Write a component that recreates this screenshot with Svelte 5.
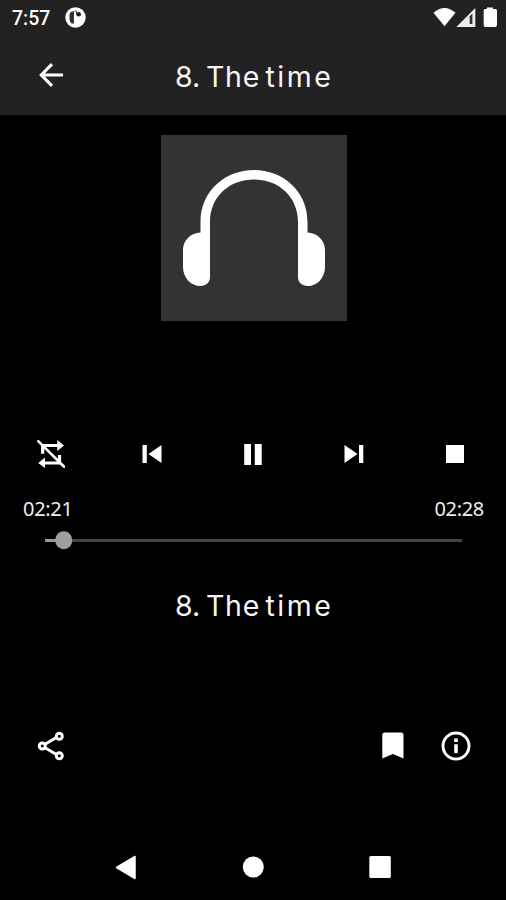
<script>
  const title = '8. The time';
  const words = title.split(' ');
  const elapsed = '02:21';
  const total = '02:28';
  const progress = 4.5;
</script>

{#snippet titleText()}
  {#each words as word, i}<span class="word w{i}">{word}{i < words.length - 1 ? ' ' : ''}</span>{/each}
{/snippet}

<div class="screen">
  <header>
    <div class="status">
      <span class="clock">7:57</span>
      <svg class="app" width="21" height="21" viewBox="0 0 21 21">
        <circle cx="10.500" cy="10.500" r="10.200" fill="#fff" />
        <path d="M9 4.200V16.500H6.800Q4.500 15.500 4.500 12V7.500Q5 4.200 9 4.200Z" fill="#333" />
        <circle cx="13.700" cy="7.300" r="2.300" fill="#222" />
        <path d="M9.500 4.200H11.500V8" stroke="#444" stroke-width="1" fill="none" />
      </svg>
      <svg class="signals" width="64" height="21" viewBox="0 0 64 21">
        <path d="M.5 5.700Q11.500-3.700 22.500 5.700L11.500 19.200Z" fill="#fff" />
        <path d="M42.300 1V20H23.300Z" fill="#eee" />
        <path d="M36.700 9.200 39.400 6.500V17H36.700Z" fill="#333" />
        <path d="M54 .5H60V2H62.500Q64 2 64 3.500V18Q64 20 62 20H52.500Q50.700 20 50.700 18V3.500Q50.700 2 52 2H54Z" fill="#fff" />
      </svg>
    </div>
    <div class="bar">
      <svg width="24" height="24" viewBox="0 0 24 24" fill="none" stroke="#fff" stroke-width="3.100">
        <path d="M13 1.200 2.300 12 13 22.800M2.500 12H24" />
      </svg>
      <h1>{@render titleText()}</h1>
    </div>
  </header>

  <main>
    <div class="cover">
      <svg width="186" height="186" viewBox="0 0 186 186" fill="#fff">
        <path d="M39.500 97.500V87C39.500 56 64 35 93 35S146.500 56 146.500 87V97.500C156 98 164 105 164 115V132C164 143 156 151 147 151C141 151 137 147.500 137 142V87C137 61 117 44.500 93 44.500S49 61 49 87V142C49 147.500 45 151 39.500 151C30 151 22 143 22 132V115C22 105 30 98 39.500 97.500Z" />
      </svg>
    </div>

    <div class="controls">
      <button aria-label="Repeat off">
        <svg width="28" height="28" viewBox="0 0 28 28" fill="none" stroke="#fff">
          <path d="M5.700 13.700V5.500H21M22.500 15V23H7" stroke-width="3.200" />
          <path d="M20.300 0 27 5.500 20.300 11ZM8 17.500 1.200 23 8 28Z" fill="#fff" stroke="none" />
          <path d="M.5 .5 28 27.700" stroke-width="2.600" />
        </svg>
      </button>
      <button aria-label="Previous">
        <svg width="20" height="18" viewBox="0 0 20 18" fill="#fff"><path d="M.5 0H4.800V18H.5ZM19.500 0V18L6.500 9Z" /></svg>
      </button>
      <button aria-label="Pause">
        <svg width="18" height="21" viewBox="0 0 18 21" fill="#fff"><path d="M.2 0H7V21H.2ZM10.800 0H17.700V21H10.800Z" /></svg>
      </button>
      <button aria-label="Next">
        <svg width="20" height="18" viewBox="0 0 20 18" fill="#fff"><path d="M.5 0 13.500 9 .5 18ZM15 0H19.300V18H15Z" /></svg>
      </button>
      <button aria-label="Stop">
        <svg width="18" height="18" viewBox="0 0 18 18"><path d="M0 0H18V18H0Z" fill="#fff" /></svg>
      </button>
    </div>

    <div class="times"><span>{elapsed}</span><span>{total}</span></div>
    <div class="track">
      <div class="played" style="width: {progress}%"></div>
      <div class="thumb" style="left: {progress}%"></div>
    </div>

    <h2>{@render titleText()}</h2>

    <div class="actions">
      <svg width="28" height="30" viewBox="0 0 28 30" fill="none" stroke="#fff" stroke-width="3">
        <path d="M8 13.300 19 6.800M8 16.700 19 23.200" />
        <circle cx="5.300" cy="15" r="3" /><circle cx="22.300" cy="5.300" r="3" /><circle cx="22.300" cy="24.700" r="3" />
      </svg>
      <svg class="mark" width="22" height="27" viewBox="0 0 22 27" fill="#fff"><path d="M.3 26.500V3Q.3 .5 3 .5H19Q21.500 .5 21.500 3V26.500L11 22Z" /></svg>
      <svg width="30" height="30" viewBox="0 0 30 30">
        <circle cx="15" cy="15" r="13" fill="none" stroke="#fff" stroke-width="2.900" />
        <path d="M13.200 7.500H16.800V10.900H13.200ZM13.200 13.300H16.800V22.300H13.200Z" fill="#fff" />
      </svg>
    </div>
  </main>

  <nav>
    <svg width="22" height="25" viewBox="0 0 22 25"><path d="M20 1.500V23.500L1.500 12.500Z" fill="#fff" stroke="#fff" stroke-width="1.500" stroke-linejoin="round" /></svg>
    <svg width="22" height="22" viewBox="0 0 22 22"><circle cx="11.300" cy="11" r="10.500" fill="#fff" /></svg>
    <svg width="22" height="22" viewBox="0 0 22 22"><rect x=".3" width="21.500" height="22" rx="1.500" fill="#fff" /></svg>
  </nav>
</div>

<style>
  :global(body) { margin: 0; background: #000; }
  .screen { width: 506px; height: 900px; display: flex; flex-direction: column; background: #000; color: #fff; overflow: hidden; }
  svg { display: block; flex: none; }
  header { height: 114.500px; background: #222; flex: none; }
  .status { height: 36px; display: flex; align-items: center; padding: 0 9px 0 12px; box-sizing: border-box; }
  .clock { width: 53px; font: 500 19.500px/36px Roboto, sans-serif; padding-top: 1px; }
  .signals { margin-left: auto; margin-top: -2px; }
  .app { margin-top: -1px; }
  .bar { height: 78px; display: grid; grid-template-columns: 136px 1fr; align-items: center; padding-left: 39px; }
  h1, h2 { display: flex; margin: 0; font: 400 28.500px/36px Inter, sans-serif; color: #f5f5f5; white-space: pre; }
  h1 { padding-top: 3px; }
  .w0 { width: 31px; }
  .w1 { width: 59.500px; letter-spacing: .7px; }
  .w2 { letter-spacing: 2.500px; }
  main { flex: 1; display: flex; flex-direction: column; }
  .cover { width: 186px; height: 186px; background: #333; margin: 20px 0 0 160.500px; flex: none; }
  .controls { margin-top: 112.500px; height: 42px; display: grid; grid-template-columns: repeat(5, 1fr); padding-left: .8px; }
  button { border: 0; background: none; padding: 0; display: flex; align-items: center; justify-content: center; }
  .times { display: flex; justify-content: space-between; padding: 0 22px 0 23px; margin-top: 21px; font: 400 20px/26px "Noto Sans", sans-serif; color: #eee; letter-spacing: -.3px; }
  .track { position: relative; margin: 16.500px 44px 0 45px; height: 3px; background: #444; flex: none; }
  .played { height: 3px; background: #999; }
  .thumb { position: absolute; top: 1.500px; width: 17.500px; height: 17.500px; border-radius: 50%; background: #9e9e9e; transform: translate(-50%, -50%); }
  h2 { margin: 46.500px 0 0 175px; }
  .actions { display: flex; align-items: center; margin-top: 105.500px; padding: 0 35px 0 37px; height: 32px; }
  .mark { margin: 0 37.500px 0 auto; }
  nav { height: 66px; flex: none; display: flex; align-items: center; justify-content: space-between; padding: 0 115px; }
</style>
